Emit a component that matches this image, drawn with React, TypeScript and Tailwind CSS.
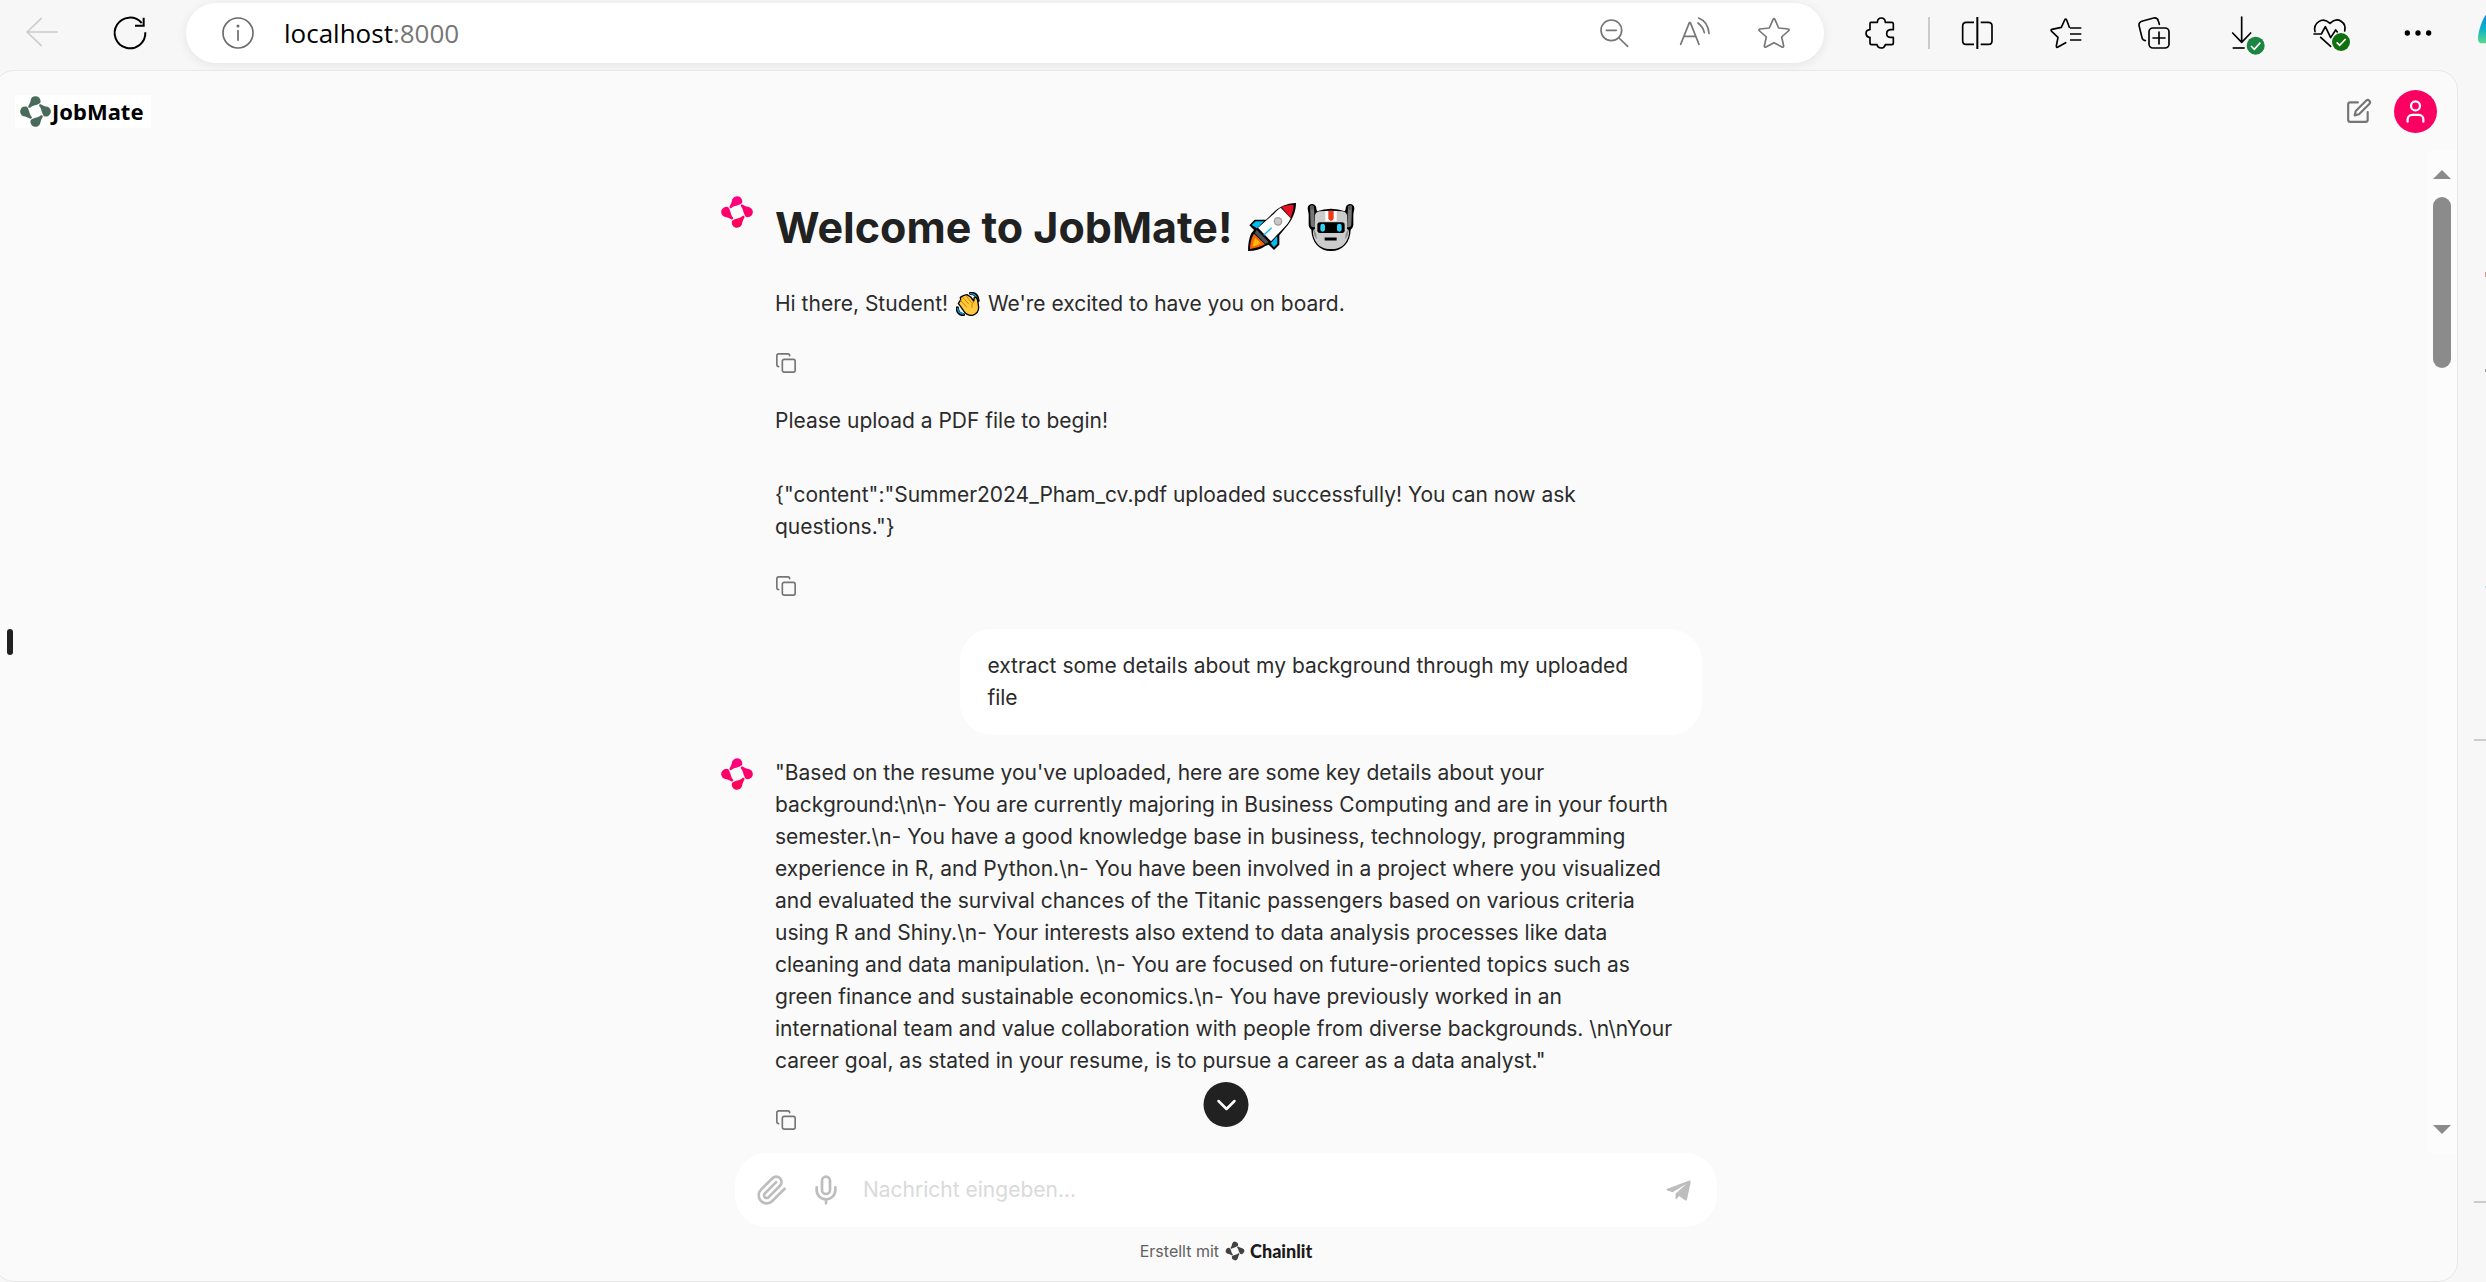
import type { ReactNode } from "react";

function IconButton({ label, children }: { label: string; children: ReactNode }) {
  return (
    <button type="button" aria-label={label} className="flex size-12 shrink-0 items-center justify-center">
      {children}
    </button>
  );
}

/* Browser toolbar icons share a 96-unit grid drawn at 32px. */
function ToolIcon({ className, children }: { className?: string; children: ReactNode }) {
  return (
    <svg
      viewBox="0 0 96 96"
      fill="none"
      stroke="currentColor"
      strokeWidth={5}
      strokeLinecap="round"
      strokeLinejoin="round"
      aria-hidden="true"
      className={`size-8 overflow-visible ${className ?? ""}`}
    >
      {children}
    </svg>
  );
}

const PETAL = "M-14 -36C-15 -28 -18 -22 -21 -17C-23 -12 -19 -9 -15 -12C-9 -18 4 -18 14 -25A15 15 0 1 0 -14 -36Z";

function Petals() {
  return (
    <>
      <path d={PETAL} />
      <path d={PETAL} transform="rotate(90)" />
      <path d={PETAL} transform="rotate(180)" />
      <path d={PETAL} transform="rotate(270)" />
    </>
  );
}

function Mark({ className, fill }: { className: string; fill: string }) {
  return (
    <svg viewBox="-49 -49 98 98" fill={fill} aria-hidden="true" className={className}>
      <Petals />
    </svg>
  );
}

function PinkMark() {
  return (
    <svg viewBox="-49 -49 98 98" aria-hidden="true" className="size-[34px] shrink-0">
      <defs>
        <linearGradient id="pink-petals" x1="0" y1="0" x2="0" y2="1">
          <stop offset="0" stopColor="#ff0088" />
          <stop offset="1" stopColor="#ff0050" />
        </linearGradient>
        <mask id="petal-mask" maskUnits="userSpaceOnUse" x="-49" y="-49" width="98" height="98">
          <g fill="#fff">
            <Petals />
          </g>
        </mask>
      </defs>
      <rect x="-49" y="-49" width="98" height="98" fill="url(#pink-petals)" mask="url(#petal-mask)" />
    </svg>
  );
}

function Rocket() {
  return (
    <svg viewBox="44 39 144 144" role="img" aria-label="rocket" className="size-12">
      <path d="M188 39C160 40 136 50 118 70L98 89H64L48 106L62 120L54 130C48 142 44 160 44 183C66 183 82 178 96 168L106 164L122 180L138 164V136L156 114C176 92 188 66 188 39Z" fill="#000" />
      <path d="M144 51C158 46 170 45 181 45C180 58 177 71 172 83Z" fill="#e81123" />
      <path d="M142 53L172 85C167 96 161 104 153 112L113 154L74 113L122 71C128 64 135 57 142 53Z" fill="#fff" />
      <path d="M67 94H92L71 115L55 105Z" fill="#00bcf2" />
      <path d="M132 139V161L122 172L112 160L128 142Z" fill="#00bcf2" />
      <path d="M70 119L106 156L97 162L64 129Z" fill="#4c5357" />
      <path d="M62 131L95 163C80 171 66 175 50 177C50 160 53 145 62 131Z" fill="#f7630c" />
      <path d="M66 143L82 159C75 165 67 168 58 169C59 160 61 151 66 143Z" fill="#ffb900" />
      <path d="M115 113L91 136" stroke="#00bcf2" strokeWidth="4" />
      <circle cx="134" cy="94" r="13" fill="#a0a0a0" />
      <circle cx="134" cy="94" r="9" fill="#c8c8c8" />
    </svg>
  );
}

function Robot() {
  return (
    <svg viewBox="220 39 144 144" role="img" aria-label="robot" className="size-12">
      <path d="M222 54A13 13 0 1 1 248 56L250 64Q270 56 292 56T334 64L336 56A13 13 0 1 1 362 54C362 62 359 66 359 76V106Q358 114 351 119C350 156 328 183 292 183S234 156 233 119Q226 114 225 106V76C225 66 222 62 222 54Z" fill="#000" />
      <path d="M229 48Q236 42 241 50L244 112Q232 112 231 104ZM355 48Q348 42 343 50L340 112Q352 112 353 104Z" fill="#767676" />
      <circle cx="235" cy="53" r="6" fill="#5d5d5d" />
      <circle cx="349" cy="53" r="6" fill="#5d5d5d" />
      <path d="M244 76Q246 66 258 64Q292 60 326 64Q338 66 340 76V116Q350 122 344 140C336 166 318 177 292 177S248 166 240 140Q234 122 244 116Z" fill="#ccc" />
      <path d="M240 118Q250 130 249 148Q238 134 240 118ZM344 118Q334 130 335 148Q346 134 344 118Z" fill="#8a8a8a" />
      <path d="M275 63H309V94H275Z" fill="#fff" />
      <path d="M284 63H300V85Q299 92 292 93Q285 92 284 85Z" fill="#f03a17" />
      <rect x="251" y="97" width="82" height="32" rx="8" fill="#000" />
      <rect x="260" y="101" width="14" height="24" rx="7" fill="#31d2f7" />
      <rect x="310" y="101" width="14" height="24" rx="7" fill="#31d2f7" />
      <path d="M273 147H309" stroke="#000" strokeWidth="9" />
    </svg>
  );
}

function WavingHand() {
  return (
    <svg viewBox="0 0 72 72" role="img" aria-label="waving hand" className="mx-[2px] inline-block size-6 align-[-5px]">
      <path d="M44 4Q64 4 66 26M4 48Q4 66 22 68" fill="none" stroke="#000" strokeWidth="10" strokeLinecap="round" />
      <path d="M44 5Q62 6 64 25M5 49Q6 64 22 66" fill="none" stroke="#00a3d9" strokeWidth="4" strokeLinecap="round" />
      <path d="M7 34L14 24L13 16L22 11L33 8L44 15L53 27L55 16Q62 14 65 25L68 46Q68 64 50 70Q34 72 24 58Z" fill="#ffc83d" stroke="#000" strokeWidth="4" strokeLinejoin="round" />
      <path d="M14 26L31 44M20 16L38 36M31 12L46 32M54 28Q44 36 48 46" fill="none" stroke="#d67d00" strokeWidth="3" strokeLinecap="round" />
    </svg>
  );
}

function CopyButton() {
  return (
    <button type="button" aria-label="Copy" className="mt-[31px] block h-6 text-[#757575]">
      <svg viewBox="0 0 24 24" fill="none" stroke="currentColor" strokeWidth="1.8" strokeLinecap="round" strokeLinejoin="round" aria-hidden="true" className="size-[22px]">
        <rect x="8" y="8" width="14" height="14" rx="2" />
        <path d="M4 16c-1.1 0-2-.9-2-2V4c0-1.1.9-2 2-2h10c1.1 0 2 .9 2 2" />
      </svg>
    </button>
  );
}

function Toolbar() {
  return (
    <header className="flex h-[70px] shrink-0 items-start overflow-hidden bg-[#f7f7f7] pt-[3px] pl-[18px]">
      <nav aria-label="Browser navigation" className="flex h-15 items-center gap-10">
        <IconButton label="Back">
          <ToolIcon className="text-[#cccccc]">
            <path d="M3 45H94M46 4L3 45L46 86" />
          </ToolIcon>
        </IconButton>
        <IconButton label="Reload">
          <ToolIcon className="text-black">
            <path d="M94 46A46 46 0 1 1 83 18M89 2V26H63" strokeLinecap="butt" strokeLinejoin="miter" strokeWidth={6} />
          </ToolIcon>
        </IconButton>
      </nav>
      <div className="ml-8 flex h-15 min-w-0 flex-1 items-center rounded-full bg-white pr-[26px] pl-7 shadow-[0_2px_12px_rgba(0,0,0,0.08)]">
        <IconButton label="Site information">
          <ToolIcon className="text-[#6b6b6b]">
            <circle cx="48" cy="48" r="45" />
            <path d="M48 41V70" />
            <circle cx="48" cy="27" r="2" />
          </ToolIcon>
        </IconButton>
        <div role="textbox" aria-label="Address" className="ml-[22px] flex-1 font-['Open_Sans','Noto_Sans',sans-serif] text-[26px] leading-8 text-black">
          localhost<span className="text-[#767676]">:8000</span>
        </div>
        <div className="flex items-center gap-8">
          <IconButton label="Zoom out">
            <ToolIcon className="text-[#767676]">
              <circle cx="40" cy="40" r="31" />
              <path d="M25 40H55M63 63L89 88" />
            </ToolIcon>
          </IconButton>
          <IconButton label="Read aloud">
            <ToolIcon className="text-[#767676]">
              <path d="M8 82L34 17H37L63 82M17 58H54M60 18Q75 29 79 47M62 3Q91 15 93 49" />
            </ToolIcon>
          </IconButton>
          <IconButton label="Add to favorites">
            <ToolIcon className="text-[#767676]">
              <path d="M45 8Q48 2 51 8L62 33L90 36Q96 38 91 42L71 60L77 87Q77 92 72 90L48 77L24 90Q19 92 19 87L25 60L5 42Q0 38 6 36L34 33Z" />
            </ToolIcon>
          </IconButton>
        </div>
      </div>
      <div className="ml-8 flex h-15 items-center text-black">
        <IconButton label="Extensions">
          <ToolIcon>
            <path d="M20 16H40Q41 3 52 3T64 16H83Q88 16 88 21V38H79Q68 40 68 50T79 61H88V78Q88 83 83 83H64Q61 93 51 93T39 83H23Q18 83 18 78V61H15Q6 59 6 49T18 38V20Q18 16 20 16Z" />
          </ToolIcon>
        </IconButton>
        <div className="mx-6 h-8 w-[2px] bg-[#cccccc]" />
        <div className="flex items-center gap-10">
          <IconButton label="Split screen">
            <ToolIcon>
              <path d="M36 16H13Q2 16 2 27V71Q2 82 13 82H36M56 16H79Q90 16 90 27V71Q90 82 79 82H56" strokeLinecap="butt" />
              <path d="M46 0V96" strokeLinecap="butt" strokeWidth={6} />
            </ToolIcon>
          </IconButton>
          <IconButton label="Favorites">
            <ToolIcon>
              <path d="M60 33H94M60 51H94M60 69H94" strokeLinecap="butt" />
              <path d="M58 31L50 9Q47 3 44 9L34 31L6 37Q1 39 5 43L24 61L19 87Q19 93 24 90L47 77" />
            </ToolIcon>
          </IconButton>
          <IconButton label="Collections">
            <ToolIcon>
              <rect x="33" y="33" width="60" height="60" rx="12" />
              <path d="M63 45V81M45 63H81M64 22L61 12Q58 1 47 3L14 12Q2 15 3 25L12 62Q14 70 22 71" />
            </ToolIcon>
          </IconButton>
          <IconButton label="Downloads">
            <ToolIcon>
              <path d="M47 0V75M20 48L47 76L74 48" />
              <path d="M20 93H56" strokeLinecap="butt" />
              <circle cx="89" cy="86" r="30" fill="#f7f7f7" stroke="none" />
              <circle cx="89" cy="86" r="27" fill="#1b8541" stroke="none" />
              <path d="M75 87L85 97L103 77" stroke="#fff" strokeLinecap="butt" strokeLinejoin="miter" />
            </ToolIcon>
          </IconButton>
          <IconButton label="Browser essentials">
            <ToolIcon>
              <path d="M3 44C-3 20 24 -4 48 19C72 -4 98 18 92 42M0 51H22L34 29L50 62L65 39L70 45M20 61L50 88" />
              <circle cx="81" cy="75" r="30" fill="#f7f7f7" stroke="none" />
              <circle cx="81" cy="75" r="27" fill="#0e700e" stroke="none" />
              <path d="M68 76L77 85L95 66" stroke="#fff" strokeLinecap="butt" strokeLinejoin="miter" />
            </ToolIcon>
          </IconButton>
          <IconButton label="Settings and more">
            <ToolIcon>
              <g fill="currentColor" stroke="none">
                <circle cx="16" cy="48" r="8" />
                <circle cx="48" cy="48" r="8" />
                <circle cx="80" cy="48" r="8" />
              </g>
            </ToolIcon>
          </IconButton>
        </div>
        <button type="button" aria-label="Copilot" className="mb-2 ml-9 w-2">
          <svg viewBox="0 0 24 90" aria-hidden="true" className="h-[30px] w-2">
            <defs>
              <linearGradient id="copilot" x1="0" y1="0" x2="0" y2="1">
                <stop offset="0.1" stopColor="#0f8fe0" />
                <stop offset="0.5" stopColor="#0fb3c8" />
                <stop offset="1" stopColor="#5bd98a" />
              </linearGradient>
            </defs>
            <path d="M24 2C14 14 0 50 0 74Q0 88 12 88H24Z" fill="url(#copilot)" />
          </svg>
        </button>
      </div>
    </header>
  );
}

function AppHeader() {
  return (
    <div className="flex h-20 shrink-0 items-center justify-between px-5">
      <a href="#" className="flex h-[33px] items-center bg-white pr-[7px] pl-1 font-['Noto_Sans',sans-serif] text-[22px] leading-8 font-bold text-black">
        <Mark className="size-[33px]" fill="#4a6a5c" />
        JobMate
      </a>
      <div className="flex items-center gap-[22px]">
        <button type="button" aria-label="New chat" className="text-[#757575]">
          <svg viewBox="0 0 24 24" fill="none" stroke="currentColor" strokeWidth="2" strokeLinecap="round" strokeLinejoin="round" aria-hidden="true" className="size-[26px]">
            <path d="M11 4H4a2 2 0 0 0-2 2v14a2 2 0 0 0 2 2h14a2 2 0 0 0 2-2v-7" />
            <path d="M18.500 2.500a2.120 2.120 0 0 1 3 3L12 15l-4 1 1-4Z" />
          </svg>
        </button>
        <button type="button" aria-label="Account" className="flex size-[43px] items-center justify-center rounded-full bg-[#fa0063] text-white">
          <svg viewBox="0 0 24 24" fill="none" stroke="currentColor" strokeWidth="2" strokeLinecap="round" strokeLinejoin="round" aria-hidden="true" className="size-[27px]">
            <path d="M19 21v-2a4 4 0 0 0-4-4H9a4 4 0 0 0-4 4v2" />
            <circle cx="12" cy="7" r="4" />
          </svg>
        </button>
      </div>
    </div>
  );
}

const ANSWER =
  "\"Based on the resume you've uploaded, here are some key details about your background:\\n\\n- You are currently majoring in Business Computing and are in your fourth semester.\\n- You have a good knowledge base in business, technology, programming experience in R, and Python.\\n- You have been involved in a project where you visualized and evaluated the survival chances of the Titanic passengers based on various criteria using R and Shiny.\\n- Your interests also extend to data analysis processes like data cleaning and data manipulation. \\n- You are focused on future-oriented topics such as green finance and sustainable economics.\\n- You have previously worked in an international team and value collaboration with people from diverse backgrounds. \\n\\nYour career goal, as stated in your resume, is to pursue a career as a data analyst.\"";

function Messages() {
  return (
    <div className="mx-auto w-full max-w-[982px] pt-11">
      <article className="flex gap-[21px]">
        <PinkMark />
        <div className="max-w-[910px] min-w-0 flex-1">
          <h1 className="flex h-16 items-center text-[43px] leading-[64px] font-bold text-[#212121]">
            Welcome to JobMate!
            <span className="ml-4 flex gap-[11px]">
              <Rocket />
              <Robot />
            </span>
          </h1>
          <p className="mt-[29px]">
            Hi there, Student! <WavingHand /> We're excited to have you on board.
          </p>
          <CopyButton />
          <p className="mt-[30px]">Please upload a PDF file to begin!</p>
          <p className="mt-[42px]">{'{"content":"Summer2024_Pham_cv.pdf uploaded successfully! You can now ask questions."}'}</p>
          <CopyButton />
        </div>
      </article>
      <article className="mt-[31px] pl-[55px]">
        <p className="ml-auto w-4/5 rounded-[32px] bg-white py-[21px] pr-11 pl-[27px]">
          extract some details about my background through my uploaded file
        </p>
      </article>
      <article className="mt-[22px] flex gap-[21px]">
        <PinkMark />
        <div className="max-w-[910px] min-w-0 flex-1">
          <p>{ANSWER}</p>
          <CopyButton />
        </div>
      </article>
    </div>
  );
}

function Scrollbar() {
  return (
    <div aria-hidden="true" className="flex w-[30px] shrink-0 flex-col items-center bg-[#fcfcfc] py-[19px]">
      <svg viewBox="0 0 18 9" className="h-[9px] w-[18px]">
        <path d="M0 9L9 0L18 9Z" fill="#8b8b8b" />
      </svg>
      <div className="mt-[18px] h-[171px] w-[18px] rounded-full bg-[#8b8b8b]" />
      <svg viewBox="0 0 18 9" className="mt-auto h-[9px] w-[18px]">
        <path d="M0 0L9 9L18 0Z" fill="#8b8b8b" />
      </svg>
    </div>
  );
}

function Composer() {
  return (
    <footer className="shrink-0 pb-5">
      <form className="mx-auto flex h-[74px] w-full max-w-[982px] items-center rounded-[32px] bg-white pr-[26px] pl-[21px]">
        <button type="button" aria-label="Attach file" className="text-[#bdbdbd]">
          <svg viewBox="0 0 24 24" fill="none" stroke="currentColor" strokeWidth="2" strokeLinecap="round" strokeLinejoin="round" aria-hidden="true" className="size-8">
            <path d="m21.440 11.050-9.190 9.190a6 6 0 0 1-8.490-8.490l8.570-8.570A4 4 0 1 1 18 8.840l-8.590 8.570a2 2 0 0 1-2.830-2.830l8.490-8.480" />
          </svg>
        </button>
        <button type="button" aria-label="Record audio" className="ml-[22px] text-[#bdbdbd]">
          <svg viewBox="0 0 24 24" fill="none" stroke="currentColor" strokeWidth="2" strokeLinecap="round" strokeLinejoin="round" aria-hidden="true" className="size-8">
            <rect x="9" y="2" width="6" height="13" rx="3" />
            <path d="M19 10v2a7 7 0 0 1-14 0v-2M12 19v3" />
          </svg>
        </button>
        <input
          type="text"
          aria-label="Nachricht eingeben"
          placeholder="Nachricht eingeben..."
          className="ml-[21px] min-w-0 flex-1 bg-transparent outline-none placeholder:text-[#dadada]"
        />
        <button type="submit" aria-label="Send" className="text-[#bdbdbd]">
          <svg viewBox="1100 325 74 64" fill="currentColor" aria-hidden="true" className="h-[21px] w-[25px]">
            <path d="M1168 327Q1175 325 1174 332L1163 384Q1161 390 1156 386L1139 374L1132 382Q1128 386 1128 380V367L1161 337L1119 362L1103 357Q1098 354 1103 352Z" />
          </svg>
        </button>
      </form>
      <a href="#" className="mx-auto mt-[14px] flex h-5 w-fit items-center text-[16px] leading-5 text-[#616161]">
        Erstellt mit
        <Mark className="ml-[6px] size-5" fill="#424242" />
        <span className="ml-[5px] font-['Lato',sans-serif] text-[18px] font-black text-[#1a1a1a]">Chainlit</span>
      </a>
    </footer>
  );
}

function EdgeSidebar() {
  return (
    <aside aria-hidden="true" className="flex w-7 shrink-0 flex-col items-end bg-[#f7f7f7]">
      <div className="mt-[202px] h-[5px] w-px bg-[#dd9a80]" />
      <div className="mt-[92px] h-[3px] w-px bg-[#a0a0a0]" />
      <div className="mt-[214px] h-[2px] w-px bg-[#b5dfe8]" />
      <div className="mt-[151px] h-[2px] w-3 bg-[#cccccc]" />
      <div className="mt-[460px] h-[2px] w-3 bg-[#cccccc]" />
    </aside>
  );
}

export default function App() {
  return (
    <div className="flex h-screen flex-col overflow-hidden bg-[#f7f7f7] font-['Inter',sans-serif] text-[21px] leading-8 text-[#2b2b2b]">
      <Toolbar />
      <div className="flex min-h-0 flex-1">
        <main className="relative -ml-[6px] flex min-w-0 flex-1 flex-col overflow-hidden rounded-[20px] border border-[#e8e8e8] bg-[#fafafa]">
          <AppHeader />
          <div className="flex min-h-0 flex-1">
            <div className="min-w-0 flex-1 overflow-hidden">
              <Messages />
            </div>
            <Scrollbar />
          </div>
          <Composer />
          <button type="button" aria-label="Open side panel" className="absolute top-[558px] left-3 h-[26px] w-[6px] rounded-full bg-[#212121]" />
          <button type="button" aria-label="Scroll to bottom" className="absolute bottom-[154px] left-1/2 flex size-[45px] -translate-x-1/2 items-center justify-center rounded-full bg-[#212121] text-white">
            <svg viewBox="0 0 24 24" fill="none" stroke="currentColor" strokeWidth="2.500" strokeLinecap="round" strokeLinejoin="round" aria-hidden="true" className="size-6">
              <path d="M4 8l8 8 8-8" />
            </svg>
          </button>
        </main>
        <EdgeSidebar />
      </div>
    </div>
  );
}
